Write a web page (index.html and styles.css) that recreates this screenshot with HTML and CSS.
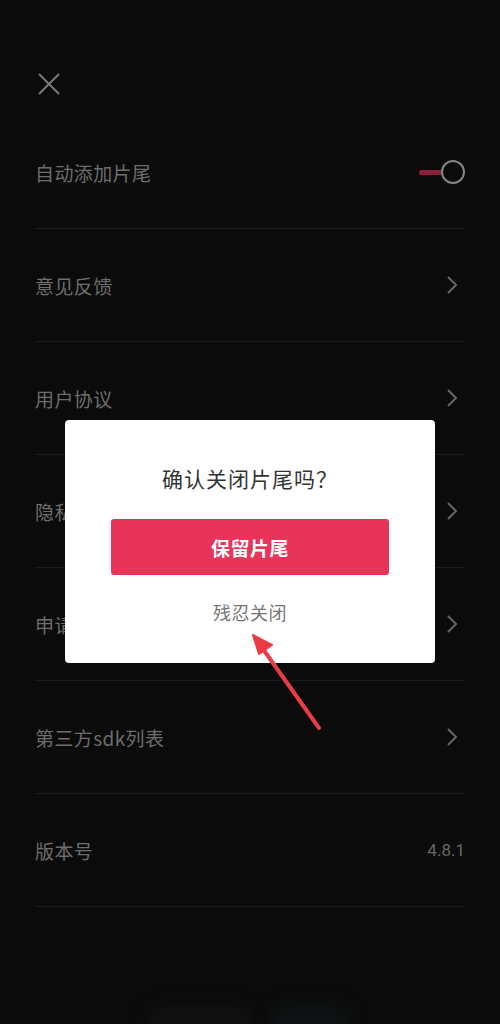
FILE: index.html
```html
<!DOCTYPE html>
<html lang="zh">
<head>
<meta charset="utf-8">
<link rel="stylesheet" href="styles.css">
</head>
<body>
<div class="page">
  <header class="header">
    <svg class="close" width="24" height="24" viewBox="0 0 24 24"><path d="M2 2 L22 22 M22 2 L2 22" stroke="#7a7a7a" stroke-width="2" fill="none"/></svg>
  </header>
  <ul class="list">
    <li class="row"><span class="label">自动添加片尾</span>
      <span class="toggle"><span class="track"></span><span class="knob"></span></span>
    </li>
    <li class="row"><span class="label">意见反馈</span><svg class="chev" width="12" height="20" viewBox="0 0 12 20"><path d="M2 2 L10 10 L2 18" stroke="#666" stroke-width="2" fill="none"/></svg></li>
    <li class="row"><span class="label">用户协议</span><svg class="chev" width="12" height="20" viewBox="0 0 12 20"><path d="M2 2 L10 10 L2 18" stroke="#666" stroke-width="2" fill="none"/></svg></li>
    <li class="row"><span class="label">隐私政策</span><svg class="chev" width="12" height="20" viewBox="0 0 12 20"><path d="M2 2 L10 10 L2 18" stroke="#666" stroke-width="2" fill="none"/></svg></li>
    <li class="row"><span class="label">申请注销账号</span><svg class="chev" width="12" height="20" viewBox="0 0 12 20"><path d="M2 2 L10 10 L2 18" stroke="#666" stroke-width="2" fill="none"/></svg></li>
    <li class="row"><span class="label">第三方sdk列表</span><svg class="chev" width="12" height="20" viewBox="0 0 12 20"><path d="M2 2 L10 10 L2 18" stroke="#666" stroke-width="2" fill="none"/></svg></li>
    <li class="row"><span class="label">版本号</span><span class="version">4.8.1</span></li>
  </ul>
  <div class="bottom">
    <span class="blur blur-a"></span>
    <span class="blur blur-b"></span>
  </div>

  <div class="dialog">
    <div class="title">确认关闭片尾吗？</div>
    <button class="keep">保留片尾</button>
    <div class="cancel">残忍关闭</div>
  </div>

  <svg class="arrow" width="90" height="110" viewBox="0 0 90 110">
    <path d="M84 103 L28 24" stroke="#ea3c44" stroke-width="4" stroke-linecap="round" fill="none"/>
    <path d="M18 10 L37 20 L24 29 Z" fill="#ea3c44" stroke="#ea3c44" stroke-width="2" stroke-linejoin="round"/>
  </svg>
</div>
</body>
</html>
```
FILE: styles.css
```css
* { box-sizing: border-box; }
html, body {
  margin: 0;
  padding: 0;
  background: #0b0b0b;
}
body {
  font-family: "Noto Sans CJK SC", "Noto Sans", sans-serif;
}
.page {
  position: relative;
  width: 500px;
  height: 1024px;
  overflow: hidden;
  background: #0b0b0b;
}
.header {
  height: 116px;
  padding: 72px 0 0 37px;
}
.close { display: block; }
.list {
  list-style: none;
  margin: 0;
  padding: 0 35px;
}
.row {
  height: 113px;
  border-bottom: 1.5px solid #1a1a1a;
  display: flex;
  align-items: center;
  justify-content: space-between;
  padding-bottom: 0;
}
.label {
  font-size: 19px;
  color: #6d6d6d;
  letter-spacing: 0.4px;
}
.chev { margin-right: 7px; }
.version {
  font-family: "Roboto", "Noto Sans", sans-serif;
  font-size: 17px;
  color: #666;
}
.toggle {
  display: flex;
  align-items: center;
  margin-right: 0;
}
.track {
  width: 24px;
  height: 5px;
  background: #8c1f3c;
  border-radius: 3px;
  margin-right: -2px;
}
.knob {
  width: 24px;
  height: 24px;
  border: 2px solid #858585;
  border-radius: 50%;
  background: #0b0b0b;
}
.bottom {
  display: flex;
  justify-content: center;
  gap: 20px;
  margin-top: 100px;
}
.blur {
  height: 30px;
  border-radius: 10px;
  filter: blur(8px);
}
.blur-a { width: 100px; background: #111; }
.blur-b { width: 80px; background: #0e1314; }

.dialog {
  position: absolute;
  left: 65px;
  top: 420px;
  width: 370px;
  height: 243px;
  background: #fff;
  border-radius: 4px;
  display: flex;
  flex-direction: column;
  align-items: center;
  padding-top: 43px;
}
.title {
  font-size: 21px;
  line-height: 30px;
  color: #333;
  letter-spacing: 1px;
}
.keep {
  margin-top: 26px;
  width: 278px;
  height: 56px;
  border: none;
  border-radius: 3px;
  background: #e8345a;
  color: #fff;
  font-family: "Noto Sans CJK SC", sans-serif;
  font-size: 19px;
  font-weight: 700;
  letter-spacing: 0.5px;
}
.cancel {
  margin-top: 22px;
  font-size: 18px;
  line-height: 30px;
  color: #777;
  letter-spacing: 0.5px;
}
.arrow {
  position: absolute;
  left: 235px;
  top: 625px;
}
```
